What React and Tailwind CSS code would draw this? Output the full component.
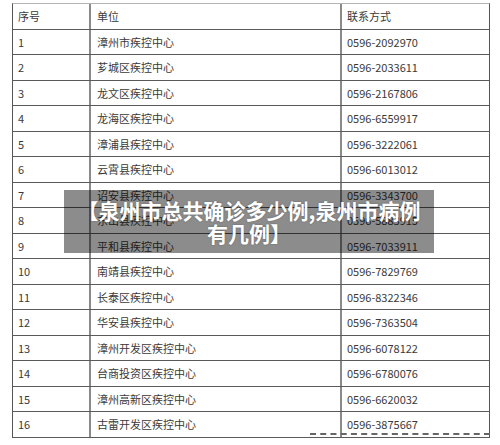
const rows = [
  ["1", "漳州市疾控中心", "0596-2092970"],
  ["2", "芗城区疾控中心", "0596-2033611"],
  ["3", "龙文区疾控中心", "0596-2167806"],
  ["4", "龙海区疾控中心", "0596-6559917"],
  ["5", "漳浦县疾控中心", "0596-3222061"],
  ["6", "云霄县疾控中心", "0596-6013012"],
  ["7", "诏安县疾控中心", "0596-3343700"],
  ["8", "东山县疾控中心", "0596-5883915"],
  ["9", "平和县疾控中心", "0596-7033911"],
  ["10", "南靖县疾控中心", "0596-7829769"],
  ["11", "长泰区疾控中心", "0596-8322346"],
  ["12", "华安县疾控中心", "0596-7363504"],
  ["13", "漳州开发区疾控中心", "0596-6078122"],
  ["14", "台商投资区疾控中心", "0596-6780076"],
  ["15", "漳州高新区疾控中心", "0596-6620032"],
  ["16", "古雷开发区疾控中心", "0596-3875667"],
];

function Row({ cells }) {
  return (
    <div className="flex h-[25.5px] items-center border-b border-[#5a5a5a]">
      <div className="w-[78px] h-full flex items-center pl-[5px] border-r-2 border-[#8a8a8a]">{cells[0]}</div>
      <div className="w-[251px] h-full flex items-center pl-[6px] border-r-2 border-[#8a8a8a]">{cells[1]}</div>
      <div className="flex-1 h-full flex items-center pl-[5px]">{cells[2]}</div>
    </div>
  );
}

export default function App() {
  return (
    <div className="relative w-[500px] h-[445px] bg-white overflow-hidden font-['Noto_Sans_CJK_SC','Noto_Sans',sans-serif] text-[11px] text-[#3a3a3a]">
      <div className="pt-[3px] pl-[12px] w-[490px]">
        <div className="border-t border-t-[#b5b5b5] border-x border-x-[#555]">
          <Row cells={["序号", "单位", "联系方式"]} />
          {rows.map((r) => (
            <Row key={r[0]} cells={r} />
          ))}
        </div>
      </div>
      <div className="absolute left-[310px] top-[433px] w-[180px] border-t-2 border-dashed border-[#666]" />
      <div className="absolute left-[64px] top-[190px] w-[370px] h-[63px] bg-black/45 flex items-center justify-center">
        <div className="text-white font-bold text-[21px] leading-[23px] text-center px-[10px] [text-shadow:0_0_2px_rgba(0,0,0,0.3)]">
          【泉州市总共确诊多少例,泉州市病例有几例】
        </div>
      </div>
    </div>
  );
}
